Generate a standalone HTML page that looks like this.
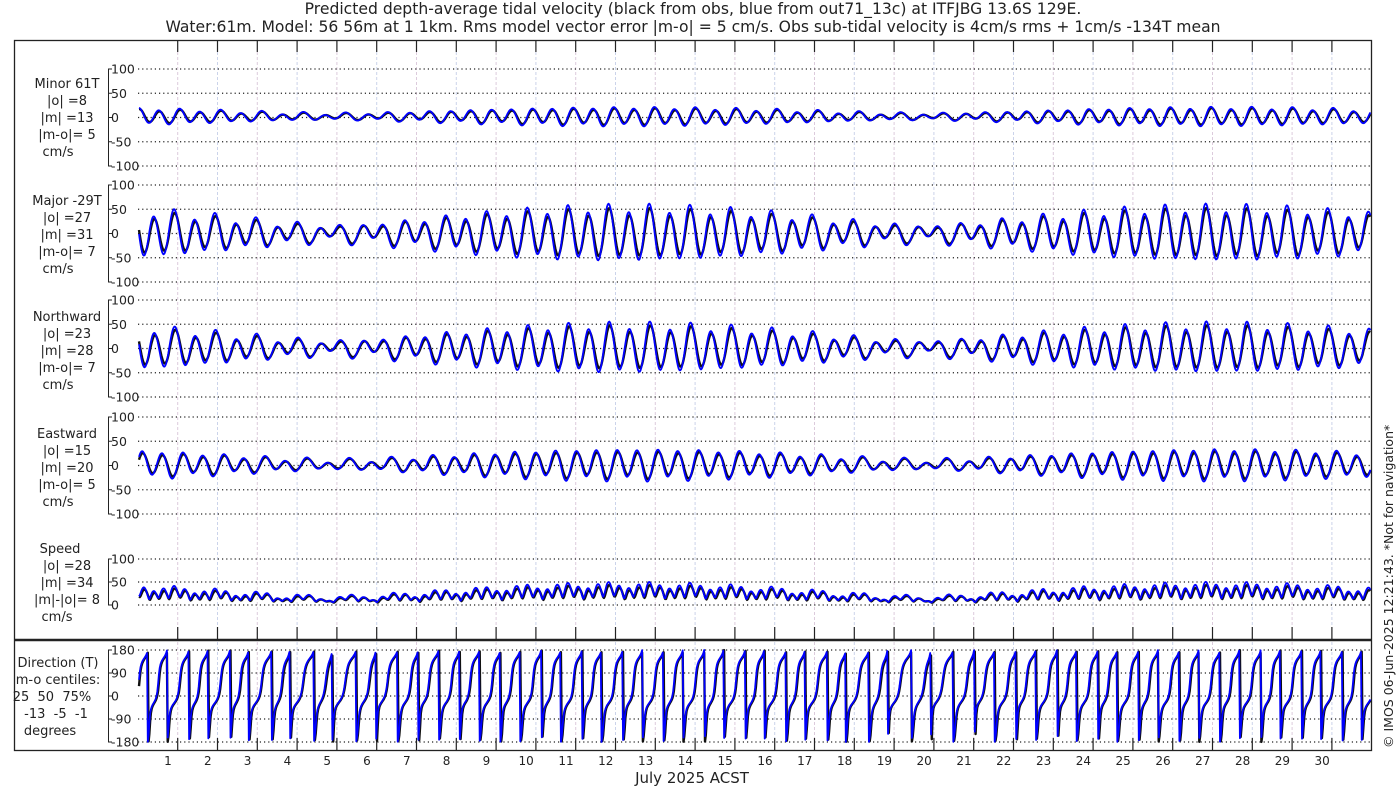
<!DOCTYPE html>
<html><head><meta charset="utf-8"><style>
html,body{margin:0;padding:0;background:#fff;width:1400px;height:800px;overflow:hidden}
svg{display:block}
text{font-family:"DejaVu Sans","Liberation Sans",sans-serif;fill:#222;white-space:pre}
</style></head><body>
<svg id="s" width="1400" height="800" viewBox="0 0 1400 800" xmlns="http://www.w3.org/2000/svg" xml:space="preserve">
<text x="693" y="14" font-size="15.6" text-anchor="middle">Predicted depth-average tidal velocity (black from obs, blue from out71_13c) at ITFJBG 13.6S 129E.</text>
<text x="693" y="32" font-size="15.6" text-anchor="middle">Water:61m. Model: 56 56m at 1 1km. Rms model vector error |m-o| = 5 cm/s. Obs sub-tidal velocity is 4cm/s rms + 1cm/s -134T mean</text>
<g font-size="13" text-anchor="middle">
<text x="67" y="88">Minor 61T</text><text x="67" y="105">|o| =8</text><text x="67" y="122">|m| =13</text><text x="67" y="139">|m-o|= 5</text><text x="58" y="156">cm/s</text>
<text x="67" y="205">Major -29T</text><text x="67" y="222">|o| =27</text><text x="67" y="239">|m| =31</text><text x="67" y="256">|m-o|= 7</text><text x="58" y="273">cm/s</text>
<text x="67" y="321">Northward</text><text x="67" y="338">|o| =23</text><text x="67" y="355">|m| =28</text><text x="67" y="372">|m-o|= 7</text><text x="58" y="389">cm/s</text>
<text x="67" y="438">Eastward</text><text x="67" y="455">|o| =15</text><text x="67" y="472">|m| =20</text><text x="67" y="489">|m-o|= 5</text><text x="58" y="506">cm/s</text>
<text x="60" y="553">Speed</text><text x="67" y="570">|o| =28</text><text x="67" y="587">|m| =34</text><text x="67" y="604">|m|-|o|= 8</text><text x="57" y="621">cm/s</text>
<text x="58" y="667">Direction (T)</text><text x="58" y="684">m-o centiles:</text><text x="52" y="701">25  50  75%</text><text x="56" y="718">-13  -5  -1</text><text x="50" y="735">degrees</text>
</g>
<text x="692" y="783" font-size="15" text-anchor="middle">July 2025 ACST</text>
<text transform="translate(1393,748) rotate(-90)" font-size="12.5">© IMOS 06-Jun-2025 12:21:43. *Not for navigation*</text>
<g id="g"></g>
</svg>
<script>
var NS="http://www.w3.org/2000/svg",G=document.getElementById("g");
function el(n,a,p){var e=document.createElementNS(NS,n);for(var k in a)e.setAttribute(k,a[k]);(p||G).appendChild(e);return e;}
var X0=139,X1=1371,DW=39.8;
for(var d=1;d<=30;d++){var x=177.7+(d-1)*DW;
 el("line",{x1:x,y1:52,x2:x,y2:738,stroke:d%2?"#dccbdc":"#cbd3ea","stroke-width":1,"stroke-dasharray":"3,2"});
 el("line",{x1:x,y1:40,x2:x,y2:52,stroke:"#222","stroke-width":1.2});
 el("line",{x1:x,y1:627,x2:x,y2:640,stroke:"#222","stroke-width":1.2});
 el("line",{x1:x,y1:738,x2:x,y2:751,stroke:"#222","stroke-width":1.2});
 var t=el("text",{x:168+(d-1)*DW,y:765,"font-size":"12","text-anchor":"middle"});t.textContent=d;}
el("rect",{x:14.5,y:40.5,width:1357,height:710,fill:"none",stroke:"#222","stroke-width":1.3});
el("line",{x1:14,y1:640,x2:1372,y2:640,stroke:"#222","stroke-width":2.5});
var P=[[69,166,[100,50,0,-50,-100],100,-100],[185,282,[100,50,0,-50,-100],100,-100],[300,397,[100,50,0,-50,-100],100,-100],[417,514,[100,50,0,-50,-100],100,-100],[559,605,[100,50,0],100,0],[650,742,[180,90,0,-90,-180],180,-180]];
P.forEach(function(p){
 el("line",{x1:108.5,y1:p[0],x2:108.5,y2:p[1],stroke:"#222","stroke-width":1});
 p[2].forEach(function(v){var y=p[0]+(p[3]-v)/(p[3]-p[4])*(p[1]-p[0]);
  el("line",{x1:108,y1:y,x2:112,y2:y,stroke:"#222","stroke-width":1});
  el("line",{x1:138,y1:y,x2:1371,y2:y,stroke:"#222","stroke-width":1.2,"stroke-dasharray":"1.2,3"});
  var t=el("text",{x:111,y:y+4.5,"font-size":"12.5"});t.textContent=v;});
});
function comp(t,sc,ph){
 var a=2*Math.PI*1.9323*(t-12.3)+ph, b=2*Math.PI*2*(t-12.3)+ph, k=2*Math.PI*1.0027*t+0.8;
 var M=sc*(34*Math.cos(a)+19*Math.cos(b)+9*Math.cos(k));
 var m=sc*(12*Math.sin(a)+6*Math.sin(b)+3*Math.sin(k))+2;
 return [M,m];}
function series(sc,ph){var r=[];for(var t=0;t<=30.95;t+=0.02){var c=comp(t,sc,ph);
 var M=c[0],m=c[1];var N=0.875*M+0.485*m,E=-0.485*M+0.875*m;
 var spd=Math.sqrt(M*M+m*m)*0.75+4;var dir=Math.atan2(E,N)*180/Math.PI;
 r.push([t,m,M,N,E,spd,dir]);}return r;}
function draw(r,col,w){
 for(var i=0;i<6;i++){var p=P[i],s="";
  r.forEach(function(q,j){var v=q[i+1];v=Math.max(p[4],Math.min(p[3],v));
   var x=X0+q[0]*DW, y=p[0]+(p[3]-v)/(p[3]-p[4])*(p[1]-p[0]);
   s+=(j?"L":"M")+x.toFixed(1)+" "+y.toFixed(1);});
  el("path",{d:s,fill:"none",stroke:col,"stroke-width":w,"stroke-linejoin":"round"});}
}
draw(series(0.85,-0.3),"#111",2.4);
draw(series(1.0,-0.1),"#0000ff",1.8);
</script>
</body></html>
